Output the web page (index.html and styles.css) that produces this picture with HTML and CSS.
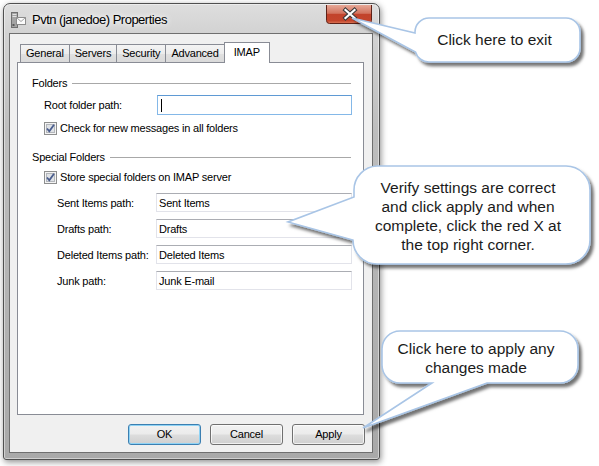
FILE: index.html
```html
<!DOCTYPE html>
<html>
<head>
<meta charset="utf-8">
<link rel="stylesheet" href="styles.css">
</head>
<body>
<div class="window">
  <div class="titlebar">
    <svg class="appicon" width="15" height="16" viewBox="0 0 15 16">
      <rect x="0.5" y="0.5" width="6" height="15" fill="#a4a4a4" stroke="#707070"/>
      <rect x="1.5" y="2" width="4" height="1" fill="#e2e2e2"/>
      <rect x="1.5" y="4" width="4" height="1" fill="#e2e2e2"/>
      <rect x="1.5" y="12" width="2" height="2" fill="#5a5a5a"/>
      <rect x="5.5" y="5.5" width="9" height="7" fill="#fbfbfb" stroke="#8c8c8c"/>
      <path d="M5.5 5.5 L10 9.5 L14.5 5.5" fill="none" stroke="#a0a0a0"/>
    </svg>
    <span class="title">Pvtn (janedoe) Properties</span>
    <svg class="close" width="46" height="19" viewBox="0 0 46 19">
      <defs>
        <linearGradient id="cg" x1="0" y1="0" x2="0" y2="1">
          <stop offset="0" stop-color="#e6a897"/>
          <stop offset="0.45" stop-color="#d2735e"/>
          <stop offset="0.5" stop-color="#c2432b"/>
          <stop offset="0.85" stop-color="#c4452c"/>
          <stop offset="1" stop-color="#de7a5a"/>
        </linearGradient>
      </defs>
      <path d="M0.5 0 V15.5 A3 3 0 0 0 3.5 18.5 H42.5 A3 3 0 0 0 45.5 15.5 V0" fill="url(#cg)" stroke="#5e2218"/>
      <path d="M19.5 5 L28.5 13 M28.5 5 L19.5 13" stroke="#3a3a3a" stroke-width="4.2" stroke-linecap="square"/>
      <path d="M19.5 5 L28.5 13 M28.5 5 L19.5 13" stroke="#ffffff" stroke-width="2.2" stroke-linecap="square"/>
    </svg>
  </div>
  <div class="client">
    <div class="tabs">
      <div class="tab">General</div>
      <div class="tab">Servers</div>
      <div class="tab">Security</div>
      <div class="tab">Advanced</div>
      <div class="tab active">IMAP</div>
    </div>
    <div class="panel">
      <div class="group">Folders</div>
      <div class="row root">
        <span class="lbl">Root folder path:</span>
        <div class="input focus"><span class="caret"></span></div>
      </div>
      <div class="row check">
        <svg class="cb" width="13" height="13" viewBox="0 0 13 13">
          <rect x="0.5" y="0.5" width="12" height="12" fill="#f4f4f4" stroke="#8e8f8f"/>
          <rect x="2.5" y="2.5" width="8" height="8" fill="#dfe2e6" stroke="#b3b6bb"/>
          <path d="M3 6.5 L5.3 9.3 L10 2.8" fill="none" stroke="#4a5d8e" stroke-width="1.8"/>
        </svg>
        <span>Check for new messages in all folders</span>
      </div>
      <div class="group g2">Special Folders</div>
      <div class="row check">
        <svg class="cb" width="13" height="13" viewBox="0 0 13 13">
          <rect x="0.5" y="0.5" width="12" height="12" fill="#f4f4f4" stroke="#8e8f8f"/>
          <rect x="2.5" y="2.5" width="8" height="8" fill="#dfe2e6" stroke="#b3b6bb"/>
          <path d="M3 6.5 L5.3 9.3 L10 2.8" fill="none" stroke="#4a5d8e" stroke-width="1.8"/>
        </svg>
        <span>Store special folders on IMAP server</span>
      </div>
      <div class="row field">
        <span class="lbl">Sent Items path:</span>
        <div class="input">Sent Items</div>
      </div>
      <div class="row field">
        <span class="lbl">Drafts path:</span>
        <div class="input">Drafts</div>
      </div>
      <div class="row field">
        <span class="lbl">Deleted Items path:</span>
        <div class="input">Deleted Items</div>
      </div>
      <div class="row field">
        <span class="lbl">Junk path:</span>
        <div class="input">Junk E-mail</div>
      </div>
    </div>
    <div class="buttons">
      <div class="btn default">OK</div>
      <div class="btn">Cancel</div>
      <div class="btn">Apply</div>
    </div>
  </div>
</div>

<svg class="callouts" width="599" height="466" viewBox="0 0 599 466">
  <defs>
    <filter id="sh" x="-10%" y="-10%" width="130%" height="140%">
      <feDropShadow dx="3" dy="3.5" stdDeviation="1.6" flood-color="#000" flood-opacity="0.55"/>
    </filter>
  </defs>
  <g filter="url(#sh)" fill="#ffffff" stroke="#a9c5e6" stroke-width="1.6">
    <path d="M429 18 H566 A14 14 0 0 1 580 32 V48 A14 14 0 0 1 566 62 H429 A14 14 0 0 1 415.5 52 L352 18 L415 33 V32 A14 14 0 0 1 429 18 Z"/>
    <path d="M377 166 H566 A24 24 0 0 1 590 190 V240 A24 24 0 0 1 566 264 H377 A24 24 0 0 1 353 240 L288 222 L354 197 V190 A24 24 0 0 1 377 166 Z"/>
    <path d="M400 331 H560 A18 18 0 0 1 578 349 V365 A18 18 0 0 1 560 383 H487 L363 428 L432 383 H400 A18 18 0 0 1 382 365 V349 A18 18 0 0 1 400 331 Z"/>
  </g>
</svg>
<div class="ctext c1">Click here to exit</div>
<div class="ctext c2">Verify settings are correct<br>and click apply and when<br>complete, click the red X at<br>the top right corner.</div>
<div class="ctext c3">Click here to apply any<br>changes made</div>
</body>
</html>
```

FILE: styles.css
```css
html, body {
  margin: 0;
  padding: 0;
}
body {
  width: 599px;
  height: 466px;
  overflow: hidden;
  background: #ffffff;
  position: relative;
  font-family: "Liberation Sans", Arial, sans-serif;
  color: #000;
}
.window {
  box-sizing: border-box;
  width: 377px;
  height: 457px;
  margin: 3px 0 0 3px;
  border: 1px solid #505050;
  border-radius: 7px 7px 3px 3px;
  background: linear-gradient(180deg, #dedede 0, #d2d2d2 30px, #bdbdbd 130px, #a9a9a9 100%);
  box-shadow: 1px 2px 6px rgba(0,0,0,0.45), inset 0 0 0 1px rgba(255,255,255,0.45);
  display: flex;
  flex-direction: column;
}
.titlebar {
  flex: none;
  height: 29px;
  display: flex;
  align-items: flex-start;
  padding-left: 7px;
}
.appicon {
  margin-top: 8px;
  flex: none;
}
.title {
  margin-left: 6px;
  margin-top: 8px;
  font-size: 13px;
  letter-spacing: -0.5px;
  line-height: 16px;
  color: #000;
  text-shadow: 0 0 8px #fff, 0 0 5px #fff;
}
.close {
  margin-left: auto;
  margin-right: 7px;
  margin-top: 1px;
  flex: none;
}
.client {
  flex: 1;
  margin: 0 6px 6px 5px;
  border: 1px solid #6f6f6f;
  background: #f0f0f0;
  padding: 8px 8px 0 7px;
  display: flex;
  flex-direction: column;
}
.tabs {
  flex: none;
  height: 20px;
  display: flex;
  align-items: flex-end;
  padding-left: 4px;
}
.tab {
  box-sizing: border-box;
  height: 18px;
  border: 1px solid #898c95;
  border-bottom: none;
  margin-left: -1px;
  padding: 0 5px;
  font-size: 11px;
  letter-spacing: -0.2px;
  line-height: 17px;
  background: linear-gradient(180deg, #f4f4f4 0%, #ececec 50%, #e0e0e0 51%, #dadada 100%);
}
.tab.active {
  height: 21px;
  margin-bottom: -1px;
  padding: 0 9px;
  line-height: 19px;
  background: #ffffff;
  position: relative;
  z-index: 1;
}
.panel {
  flex: none;
  box-sizing: border-box;
  height: 353px;
  border: 1px solid #898c95;
  background: #ffffff;
  padding: 0 11px 0 14px;
  display: flex;
  flex-direction: column;
}
.group {
  display: flex;
  align-items: center;
  height: 14px;
  font-size: 11px;
  letter-spacing: -0.2px;
  line-height: 14px;
  margin-top: 13px;
}
.group::after {
  content: "";
  flex: 1;
  height: 1px;
  background: #a8a8a8;
  margin-left: 5px;
  margin-right: 1px;
}
.row {
  display: flex;
  align-items: center;
  font-size: 11px;
  letter-spacing: -0.2px;
}
.root {
  height: 20px;
  margin-top: 5px;
  padding-left: 12px;
}
.lbl {
  flex: none;
  width: 113px;
}
.field {
  height: 19px;
  margin-top: 7px;
  padding-left: 25px;
}
.field .lbl {
  width: 99px;
}
.check {
  height: 18px;
  margin-top: 4px;
  padding-left: 12px;
  gap: 3px;
}
.cb {
  flex: none;
}
.input {
  flex: 1;
  align-self: stretch;
  box-sizing: border-box;
  border: 1px solid #e2e3ea;
  border-top-color: #abadb3;
  padding-left: 2px;
  display: flex;
  align-items: center;
  background: #ffffff;
}
.input.focus {
  border-color: #84b8e8;
  border-top-color: #5f9ad4;
}
.caret {
  width: 1px;
  height: 13px;
  margin-left: 1px;
  background: #000;
}
.buttons {
  flex: none;
  display: flex;
  justify-content: flex-end;
  gap: 9px;
  margin-top: 9px;
  margin-right: -1px;
}
.btn {
  box-sizing: border-box;
  width: 73px;
  height: 21px;
  border: 1px solid #707070;
  border-radius: 3px;
  background: linear-gradient(180deg, #f2f2f2 0%, #ebebeb 48%, #dddddd 52%, #cfcfcf 100%);
  box-shadow: inset 0 0 0 1px rgba(255,255,255,0.7);
  font-size: 11px;
  letter-spacing: -0.2px;
  line-height: 19px;
  text-align: center;
}
.btn.default {
  border-color: #3c7fb1;
  box-shadow: inset 0 0 0 1px #8fd3f5;
}
.callouts {
  position: absolute;
  left: 0;
  top: 0;
  pointer-events: none;
}
.ctext {
  position: absolute;
  font-size: 15.5px;
  line-height: 19px;
  color: #1b1b1b;
  text-align: center;
}
.c1 {
  left: 412px;
  width: 165px;
  top: 30px;
}
.c2 {
  left: 358px;
  width: 220px;
  top: 178px;
}
.c3 {
  left: 383px;
  width: 186px;
  top: 339px;
}
```
